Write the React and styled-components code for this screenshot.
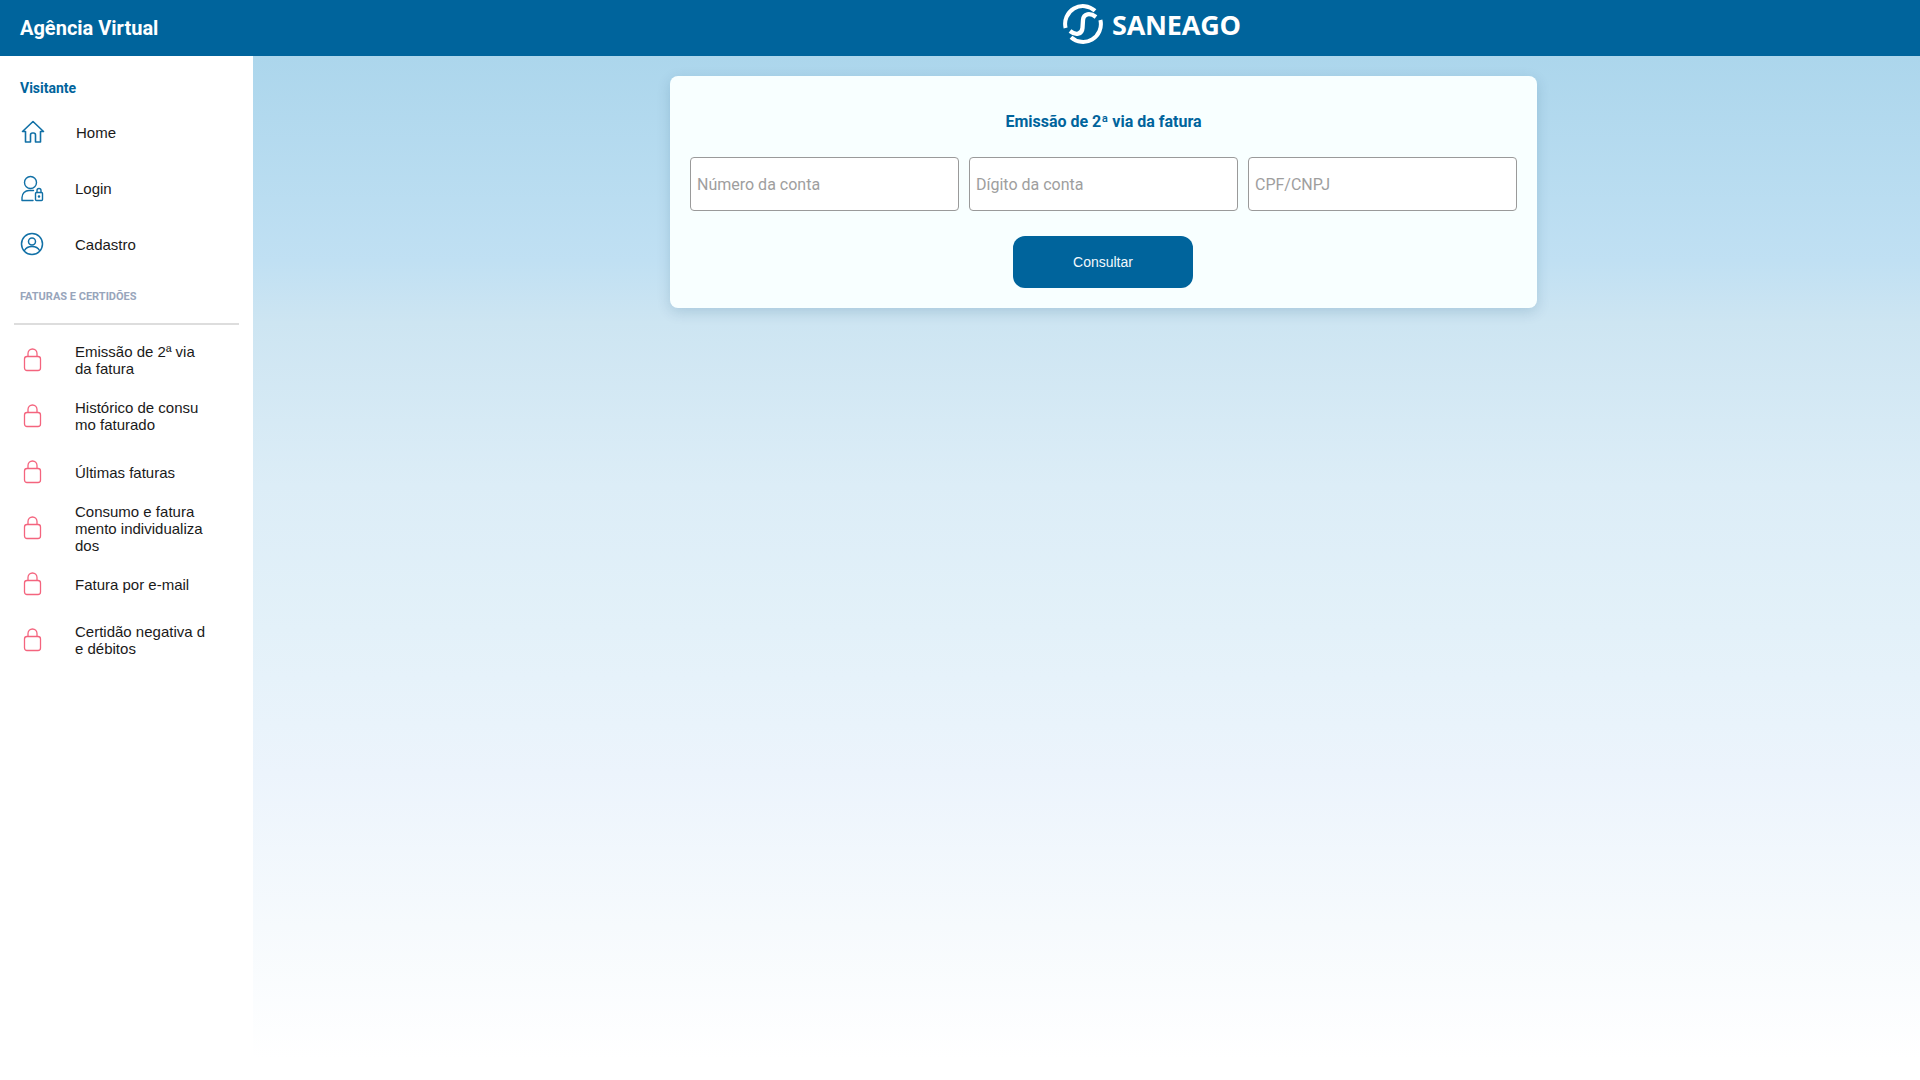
import React from "react";
import styled, { createGlobalStyle } from "styled-components";

const Global = createGlobalStyle`
  html, body { margin: 0; padding: 0; height: 100%; background: #fff; }
  #root { height: 100vh; }
  * { box-sizing: border-box; }
`;
const Page = styled.div`
  display: flex; flex-direction: column; height: 100vh; overflow: hidden;
`;
const Header = styled.header`
  flex: 0 0 56px; height: 56px; background: #00649c; color: #fff;
  display: flex; align-items: center; padding-left: 20px; position: relative;
`;
const AppTitle = styled.h1`
  margin: 0; width: 1043px; font: 700 20px/24px Roboto, sans-serif; color: #fff;
`;
const Logo = styled.div`
  display: flex; align-items: center; gap: 9px; margin-top: -6px;
`;
const LogoText = styled.span`
  font: 700 27px/40px "Open Sans", sans-serif; color: #fff; letter-spacing: -0.2px;
`;
const LogoSvg = styled.svg`
  margin-bottom: 2px;
`;
const Body = styled.div`
  flex: 1; display: flex; min-height: 0;
`;
const Sidebar = styled.nav`
  flex: 0 0 253px; width: 253px; background: #fff; padding-top: 20px;
`;
const UserLabel = styled.div`
  font: 700 14px/24px Roboto, sans-serif; color: #00649c; padding-left: 20px; margin-bottom: 4px;
`;
const Row = styled.div`
  height: 56px; display: flex; align-items: center; padding-left: ${p => p.$pad || 20}px;
`;
const IconSlot = styled.span`
  flex: 0 0 ${p => p.$w || 55}px; display: flex; align-items: center; height: 26px;
`;
const RowText = styled.span`
  font: 400 15px/17px "Liberation Sans", Arial, sans-serif; color: #1a1a1a; white-space: pre-line;
`;
const SectionLabel = styled.div`
  font: 700 11px/14px Roboto, sans-serif; color: #98a5bb; padding: 18px 0 0 20px; text-transform: uppercase;
`;
const Divider = styled.hr`
  margin: 19px 14px 0; border: 0; height: 2px; background: #dddddd;
`;
const List = styled.div`
  padding-top: 7px;
`;
const Main = styled.main`
  flex: 1; min-width: 0; padding: 20px 0 0 34px; display: flex; justify-content: center; align-items: flex-start;
  background: linear-gradient(180deg, #acd6ec 0%, #c0e0f3 20%, #cde5f2 26%, #dcedf7 42%, #e3f1f9 56%, #ecf4fc 70%, #f6fafd 85%, #ffffff 98%);
`;
const Card = styled.section`
  width: 867px; height: 232px; background: #f8ffff; border-radius: 8px; padding: 35px 20px 0;
  box-shadow: 0 4px 14px rgba(0, 60, 100, 0.16);
  display: flex; flex-direction: column; align-items: center;
`;
const CardTitle = styled.h2`
  margin: 0; font: 700 16px/22px Roboto, sans-serif; color: #00649c;
`;
const Fields = styled.div`
  display: grid; grid-template-columns: repeat(3, 1fr); gap: 10px; width: 100%; margin-top: 24px;
`;
const Input = styled.input`
  height: 54px; width: 100%; border: 1px solid #9a9a9a; border-radius: 4px; background: #fff;
  padding: 0 7px 0 6px; font: 400 16px Roboto, sans-serif; color: #333; outline: none;
  &::placeholder { color: #9e9e9e; opacity: 1; }
`;
const Button = styled.button`
  width: 180px; height: 52px; margin: 25px 1px 0 0; border: 0; border-radius: 12px; background: #00649c;
  color: #f2f8fc; font: 400 14px "Liberation Sans", Arial, sans-serif;
`;

const HomeIcon = () => (
  <svg width="25" height="24" viewBox="-1 0 25 24" fill="none" stroke="#1170a6" strokeWidth="1.6" strokeLinejoin="round" strokeLinecap="round">
    <path d="M1.500 11.500 12 1.500l10.500 10h-3v10.500h-5V15a2 2 0 0 0-2-2h-1a2 2 0 0 0-2 2v7h-5V11.500z" />
  </svg>
);
const LoginIcon = () => (
  <svg width="24" height="27" viewBox="0 0 24 27" fill="none" stroke="#1170a6" strokeWidth="1.4" strokeLinecap="round" strokeLinejoin="round">
    <circle cx="10.500" cy="7.500" r="6" />
    <path d="M2 25.500v-3a7 7 0 0 1 7-7h4.500M2 25.500h11" />
    <rect x="15.500" y="17.500" width="7" height="8" rx="1" />
    <path d="M17 17.500v-2a2 2 0 0 1 4 0v2" />
    <circle cx="19" cy="21.500" r=".6" fill="#1170a6" />
  </svg>
);
const ProfileIcon = () => (
  <svg width="24" height="24" viewBox="0 0 24 24" fill="none" stroke="#1170a6" strokeWidth="1.500" strokeLinecap="round">
    <circle cx="12" cy="12" r="10.500" />
    <circle cx="12" cy="9.500" r="3.500" />
    <path d="M4.500 18.500c1.500-3 4.500-4 7.500-4s6 1 7.500 4" />
  </svg>
);
const LockIcon = () => (
  <svg width="19" height="24" viewBox="0 0 19 24" fill="none" stroke="#f4647e" strokeWidth="1.300">
    <rect x="1.500" y="8.500" width="16" height="14" rx="2.500" />
    <path d="M5 8.500V5.500a4.500 4.500 0 0 1 9 0v3" />
  </svg>
);
const LogoMark = () => (
  <LogoSvg width="40" height="40" viewBox="0 0 40 40" fill="none" stroke="#fff" strokeLinecap="butt">
    <path d="M2.600 24A17.800 17.800 0 0 1 32 6.800" strokeWidth="4" />
    <path d="M37.400 16A17.800 17.800 0 0 1 8 33.200" strokeWidth="4" />
    <path d="M33 13C27 8.500 20.500 9.500 20 16L19.500 24C19 30.500 12.500 31.500 7 27" strokeWidth="4.300" />
  </LogoSvg>
);

const locked = [
  "Emissão de 2ª via\nda fatura",
  "Histórico de consu\nmo faturado",
  "Últimas faturas",
  "Consumo e fatura\nmento individualiza\ndos",
  "Fatura por e-mail",
  "Certidão negativa d\ne débitos",
];

export default function App() {
  return (
    <Page>
      <Global />
      <Header>
        <AppTitle>Agência Virtual</AppTitle>
        <Logo>
          <LogoMark />
          <LogoText>SANEAGO</LogoText>
        </Logo>
      </Header>
      <Body>
        <Sidebar>
          <UserLabel>Visitante</UserLabel>
          <Row><IconSlot $w={56}><HomeIcon /></IconSlot><RowText>Home</RowText></Row>
          <Row><IconSlot><LoginIcon /></IconSlot><RowText>Login</RowText></Row>
          <Row><IconSlot><ProfileIcon /></IconSlot><RowText>Cadastro</RowText></Row>
          <SectionLabel>Faturas e Certidões</SectionLabel>
          <Divider />
          <List>
            {locked.map(t => (
              <Row key={t} $pad={23}><IconSlot $w={52}><LockIcon /></IconSlot><RowText>{t}</RowText></Row>
            ))}
          </List>
        </Sidebar>
        <Main>
          <Card>
            <CardTitle>Emissão de 2ª via da fatura</CardTitle>
            <Fields>
              <Input placeholder="Número da conta" />
              <Input placeholder="Dígito da conta" />
              <Input placeholder="CPF/CNPJ" />
            </Fields>
            <Button>Consultar</Button>
          </Card>
        </Main>
      </Body>
    </Page>
  );
}
